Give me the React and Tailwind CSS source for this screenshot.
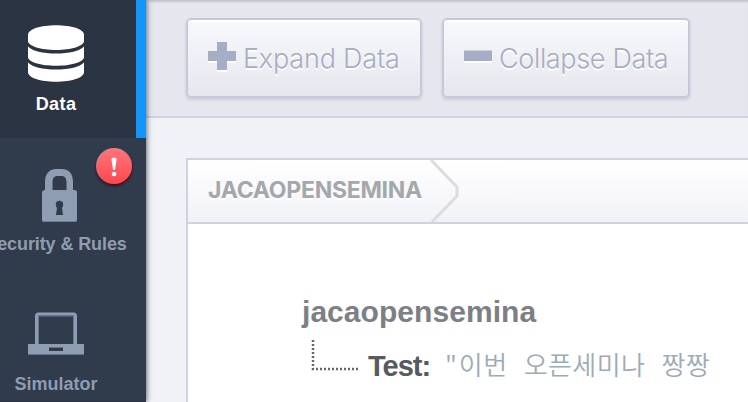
import React from "react";

const sans = "font-['Liberation_Sans',Arial,sans-serif]";

function DatabaseIcon() {
  return (
    <svg className="block h-[57px] w-14 shrink-0" viewBox="0 0 56 57" fill="#fff">
      <path d="M0 10C0 4 13 0.300 28 0.300s28 3.700 28 9.700v6c0 5-13 9-28 9S0 21 0 16z" />
      <path d="M0 21.500c4 4.500 15 7 28 7s24-2.500 28-7V32c0 5-13 8.800-28 8.800S0 37 0 32z" />
      <path d="M0 37.500c4 4.500 15 7 28 7s24-2.500 28-7V47c0 6-13 9.700-28 9.700S0 53 0 47z" />
    </svg>
  );
}

function LockIcon() {
  return (
    <svg className="ml-[7px] block h-[53px] w-[35px] shrink-0" viewBox="0 0 35 53">
      <path
        fill="#8e9db1"
        fillRule="evenodd"
        d="M3 21V13C3 4 8 0 14 0h6c7 0 11 5 11 13v8h1.500Q35 21 35 23.500v27Q35 53 32.500 53h-30Q0 53 0 50.500v-27Q0 21 3 21zM10.500 21h14v-7.500c0-4.500-2-6.500-5-6.500H15.500c-3 0-5 2-5 6.500zM14 46h7l-1-7q1.200-1.500 1.200-3.500a3.700 3.700 0 0 0-7.400 0q0 2 1.200 3.500z"
      />
      <path d="M1 52.500h33" stroke="#718097" />
    </svg>
  );
}

function LaptopIcon() {
  return (
    <svg className="block h-[43px] w-14 shrink-0" viewBox="0 0 56 43">
      <path d="M8.500 32V4q0-2 2-2h35q2 0 2 2v28" fill="none" stroke="#8e9db1" strokeWidth="3" />
      <path d="M10.500 32V4h35v28" fill="none" stroke="#6c7b90" />
      <path fill="#8e9db1" fillRule="evenodd" d="M0 32h56v11H0zM21 35.500v3.500h14v-3.500z" />
      <path d="M0 42.500h56M21 35.500h14" stroke="#64758a" />
    </svg>
  );
}

function ToolButton({ icon, width, children }) {
  return (
    <button
      className={`${width} flex h-20 shrink-0 items-center rounded-[5px] border-2 border-[#c4c9da] bg-linear-to-b from-[#f8f9fb] to-[#e6e7ed] pl-5 text-[#a5adc7] shadow-[0_2px_3px_rgba(120,125,150,0.25),inset_0_2px_0_#fff] [text-shadow:0_2px_0_#fff]`}
    >
      {icon}
      {children}
    </button>
  );
}

export default function App() {
  return (
    <div className={`${sans} relative flex h-[402px] w-[748px] overflow-hidden bg-[#f1f2f7]`}>
      <nav className="z-10 flex w-[146px] shrink-0 flex-col border-b border-[#302e48] bg-[#303b4b] text-[18px] leading-5 font-bold text-[#8e9db1] shadow-[1px_0_5px_rgba(0,0,0,0.55)]">
        <div className="flex h-[138px] shrink-0 border-r-10 border-[#1197fb] bg-[#2b3443] text-white">
          <div className="flex w-28 flex-col items-center pt-[25px]">
            <DatabaseIcon />
            <span className="mt-3 tracking-[0.4px]">Data</span>
          </div>
        </div>
        <div className="relative flex h-[140px] w-28 shrink-0 flex-col items-center pt-[31px]">
          <LockIcon />
          <span className="mt-3 tracking-[-0.1px] whitespace-nowrap">Security &amp; Rules</span>
          <span className="absolute top-[10px] left-24 flex h-9 w-9 items-center justify-center rounded-full bg-linear-to-b from-[#ff747a] to-[#ff454e] shadow-[0_2px_3px_rgba(0,0,0,0.5)]">
            <svg className="mt-px h-5 w-2" viewBox="0 0 8 20" fill="#fff">
              <path d="M1.500 2.500Q1.500 0.500 4 0.500t2.500 2L5 13H3z" />
              <circle cx="4" cy="17" r="2.300" />
            </svg>
          </span>
        </div>
        <div className="flex w-28 flex-col items-center pt-[34px]">
          <LaptopIcon />
          <span className="mt-[19px]">Simulator</span>
        </div>
      </nav>

      <main className="flex min-w-0 flex-1 flex-col">
        <div className="flex h-[118px] shrink-0 gap-5 border-b-2 border-[#d1d2df] bg-[#e6e6ef] pt-[18px] pl-10 font-['Inter',sans-serif] text-[27px] font-light shadow-[inset_0_3px_2px_-1px_#c4c4cb]">
          <ToolButton
            width="w-[236px]"
            icon={
              <svg className="mr-[7px] -mt-[3px] h-[30px] w-7 shrink-0" viewBox="0 0 28 30">
                <path fill="#fff" d="M9 2h10v9h9v10h-9v9H9v-9H0V11h9z" />
                <path fill="#a5adc7" d="M9 0h10v9h9v10h-9v9H9v-9H0V9h9z" />
              </svg>
            }
          >
            <span className="mt-0.5 tracking-[-0.2px] whitespace-nowrap">Expand Data</span>
          </ToolButton>
          <ToolButton
            width="w-[248px]"
            icon={
              <svg className="mr-[7px] -mt-[3px] h-[30px] w-7 shrink-0" viewBox="0 0 28 30">
                <path fill="#fff" d="M0 11h28v10H0z" />
                <path fill="#a5adc7" d="M0 8.500h28V19H0z" />
              </svg>
            }
          >
            <span className="mt-0.5 tracking-[-0.35px] whitespace-nowrap">Collapse Data</span>
          </ToolButton>
        </div>

        <section className="mt-10 ml-10 flex flex-1 flex-col border-t-2 border-l-2 border-[#d1d2e1] bg-white">
          <div className="flex h-16 shrink-0 items-center border-b-2 border-[#d1d2e1] bg-linear-to-b from-white to-[#f1f2f7] pl-5">
            <span className="-mt-0.5 w-[222px] font-['Inter',sans-serif] text-[23px] font-bold tracking-[-0.25px] text-[#a4a7ac] [text-shadow:0_2px_0_#fff]">
              JACAOPENSEMINA
            </span>
            <svg className="h-[62px] w-[29px] shrink-0" viewBox="0 0 29 62">
              <path fill="none" stroke="#dcdcdd" strokeWidth="3" d="M1 0 27 27v9L2 62" />
            </svg>
          </div>
          <div className="flex flex-col pt-[70px] pl-[114px] whitespace-nowrap">
            <div className="text-[30px] leading-9 font-bold tracking-[0.05px] text-[#7b8087]">jacaopensemina</div>
            <div className="flex h-10 items-start">
              <svg className="mt-[9px] ml-[9px] h-8 w-[48px] shrink-0" viewBox="0 0 48 32">
                <path d="M2 1v29h46" fill="none" stroke="#65666a" strokeWidth="2.500" strokeDasharray="2 2" />
              </svg>
              <span className="mt-[18px] ml-[9px] w-[77px] text-[29px] leading-9 font-bold tracking-[-1px] text-[#535c63]">Test:</span>
              <span className="mt-4 font-['Noto_Sans_CJK_KR',sans-serif] text-[26px] leading-9 font-[350] text-[#9dabb8] [word-spacing:10px]">
                <span className="mr-0.5">"</span>
                <span className="tracking-[0.4px]">이번 오픈세미나 짱짱</span>
              </span>
            </div>
          </div>
        </section>
      </main>
    </div>
  );
}
